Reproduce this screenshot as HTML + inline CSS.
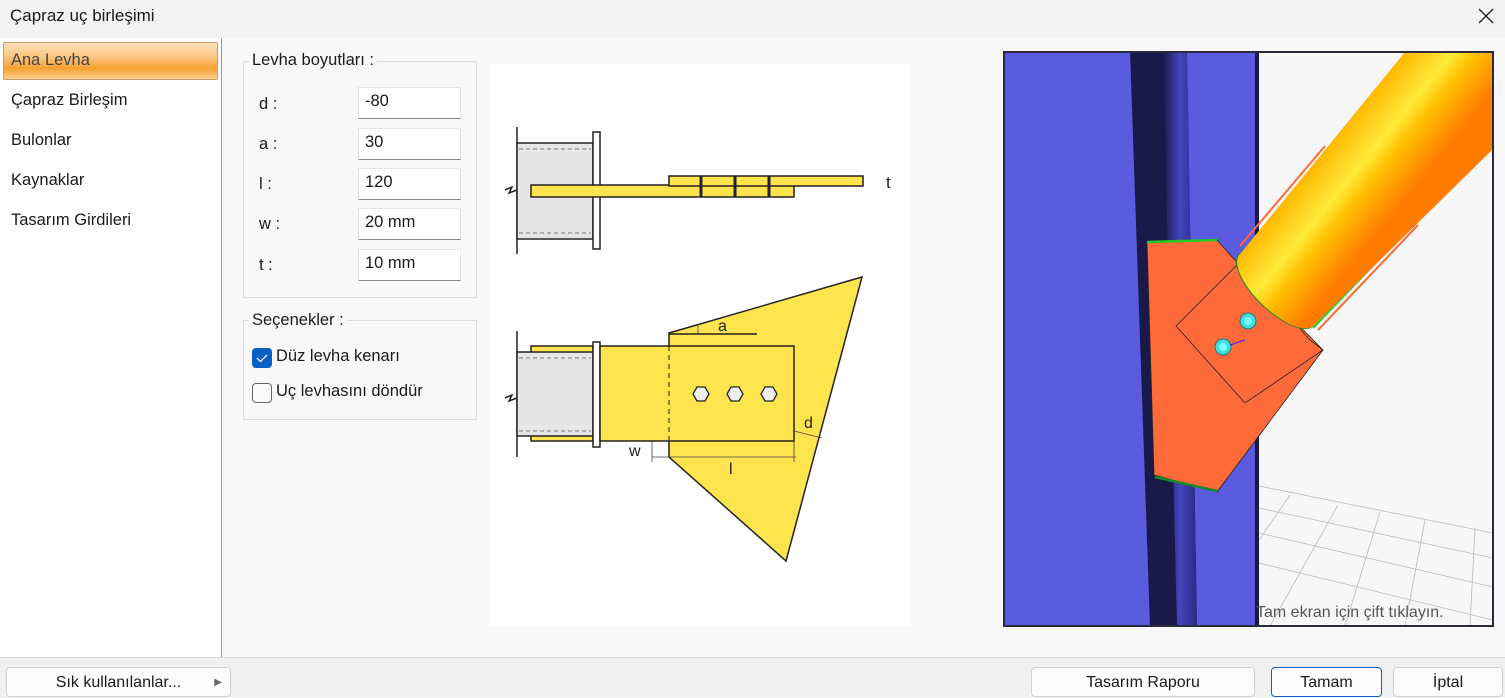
<!DOCTYPE html>
<html><head><meta charset="utf-8"><style>
*{box-sizing:border-box;margin:0;padding:0}
body{width:1505px;height:697px;background:#f8f8f8;font-family:"Segoe UI","Liberation Sans",sans-serif;color:#1a1a1a;position:relative;overflow:hidden;font-size:16px}
.abs{position:absolute}
.title{left:0;top:0;width:1505px;height:38px;background:#f3f3f3}
.title span{position:absolute;left:10px;top:6px;font-size:17px}
.left{left:0;top:38px;width:222px;height:620px;background:#fff;border-right:1px solid #999}
.item{position:absolute;left:11px;font-size:16.5px}
.sel{left:3px;top:42px;width:215px;height:38px;border:1px solid #c8a070;border-radius:2px;background:linear-gradient(#fde0b8 0%,#fbc580 40%,#f6a030 70%,#fbd08a 100%)}
.grp{border:1px solid #ddd;}
.lbl{position:absolute;font-size:16.5px}
.inp{position:absolute;left:358px;width:103px;height:32px;background:#fff;border:1px solid #e4e4e4;border-bottom:1px solid #888;padding:4px 0 0 6px;font-size:16.5px}
.btn{position:absolute;top:667px;height:30px;background:#fcfcfc;border:1px solid #d0d0d0;border-radius:4px;text-align:center;line-height:30px;font-size:16px}
</style></head><body>
<div class="abs title"><span>Çapraz uç birleşimi</span>
<svg class="abs" style="left:1477px;top:7px" width="18" height="18"><path d="M2 2L16 16M16 2L2 16" stroke="#222" stroke-width="1.4"/></svg></div>
<div class="abs left"></div>
<div class="abs sel"></div>
<div class="item" style="top:51px;color:#444">Ana Levha</div>
<div class="item" style="top:91px">Çapraz Birleşim</div>
<div class="item" style="top:131px">Bulonlar</div>
<div class="item" style="top:171px">Kaynaklar</div>
<div class="item" style="top:211px">Tasarım Girdileri</div>

<div class="abs grp" style="left:243px;top:61px;width:234px;height:237px"></div>
<div class="lbl" style="left:249px;top:51px;background:#f8f8f8;padding:0 3px">Levha boyutları :</div>
<div class="lbl" style="left:259px;top:95px">d :</div>
<div class="lbl" style="left:259px;top:135px">a :</div>
<div class="lbl" style="left:259px;top:175px">l :</div>
<div class="lbl" style="left:259px;top:215px">w :</div>
<div class="lbl" style="left:259px;top:256px">t :</div>
<div class="inp" style="top:87px">-80</div>
<div class="inp" style="top:128px">30</div>
<div class="inp" style="top:168px">120</div>
<div class="inp" style="top:208px">20 mm</div>
<div class="inp" style="top:249px">10 mm</div>

<div class="abs grp" style="left:243px;top:320px;width:234px;height:100px"></div>
<div class="lbl" style="left:249px;top:311px;background:#f8f8f8;padding:0 3px">Seçenekler :</div>
<div class="abs" style="left:252px;top:348px;width:20px;height:20px;background:#0a5fc4;border-radius:4px"><svg width="20" height="20"><path d="M5 10l3.5 3.5L15 7" stroke="#fff" fill="none" stroke-width="1.3"/></svg></div>
<div class="lbl" style="left:276px;top:347px">Düz levha kenarı</div>
<div class="abs" style="left:252px;top:383px;width:20px;height:20px;border:1px solid #666;border-radius:4px;background:#fafafa"></div>
<div class="lbl" style="left:276px;top:382px">Uç levhasını döndür</div>

<svg class="abs" style="left:490px;top:64px" width="420" height="562" viewBox="490 64 420 562">
<rect x="490" y="64" width="420" height="562" fill="#fff"/>
<g stroke="#222" stroke-width="1.5">
<line x1="517" y1="127" x2="517" y2="254"/>
<rect x="517" y="143" width="76" height="96" fill="#e6e6e6"/>
<line x1="519" y1="149" x2="591" y2="149" stroke-dasharray="4 3" stroke-width="1" stroke="#777"/>
<line x1="519" y1="233" x2="591" y2="233" stroke-dasharray="4 3" stroke-width="1" stroke="#777"/>
<rect x="593" y="132" width="7" height="117" fill="#fff"/>
<rect x="531" y="185" width="263" height="12" fill="#ffe44d"/>
<rect x="669" y="176" width="194" height="10" fill="#ffe44d"/>
<path d="M505 190l7-3-3 6 8-3" fill="none"/>
</g>
<g stroke="#222" stroke-width="3"><line x1="701" y1="176" x2="701" y2="197"/><line x1="735" y1="176" x2="735" y2="197"/><line x1="769" y1="176" x2="769" y2="197"/></g>
<text x="886" y="188" font-size="17" font-family="Liberation Sans" fill="#222">t</text>
<g stroke="#222" stroke-width="1.5">
<polygon points="669,333 862,277 786,561 669,457" fill="#ffe44d"/>
<line x1="517" y1="331" x2="517" y2="457"/>
<rect x="531" y="346" width="62" height="95" fill="#ffe44d"/>
<rect x="517" y="352" width="76" height="84" fill="#e6e6e6"/>
<line x1="519" y1="358" x2="591" y2="358" stroke-dasharray="4 3" stroke-width="1" stroke="#777"/>
<line x1="519" y1="431" x2="591" y2="431" stroke-dasharray="4 3" stroke-width="1" stroke="#777"/>
<rect x="593" y="342" width="7" height="105" fill="#fff"/>
<rect x="600" y="346" width="194" height="95" fill="#ffe44d"/>
<line x1="669" y1="346" x2="669" y2="441" stroke-dasharray="5 4" stroke-width="1"/>
<line x1="669" y1="334" x2="757" y2="334"/>
<path d="M505 398l7-3-3 6 8-3" fill="none"/>
<g fill="#eee" stroke-width="1.3">
<polygon points="693,394 697,387 705,387 709,394 705,401 697,401"/>
<polygon points="727,394 731,387 739,387 743,394 739,401 731,401"/>
<polygon points="761,394 765,387 773,387 777,394 773,401 765,401"/>
</g>
</g>
<g stroke="#444" stroke-width="0.8"><line x1="669" y1="457" x2="796" y2="457"/><line x1="794" y1="441" x2="794" y2="462"/><line x1="652" y1="440" x2="652" y2="462"/><line x1="652" y1="457" x2="669" y2="457"/><line x1="794" y1="431" x2="822" y2="438"/><line x1="698" y1="325" x2="698" y2="334"/></g>
<g font-family="Liberation Sans" font-size="16" fill="#222"><text x="718" y="331">a</text><text x="804" y="428">d</text><text x="629" y="456">w</text><text x="729" y="474">l</text></g>
</svg>

<svg class="abs" style="left:1003px;top:51px" width="491" height="576" viewBox="1003 51 491 576">
<rect x="1003" y="51" width="491" height="576" fill="#f7f7f7"/>
<g stroke="#bbb" stroke-width="0.8" fill="none">
<path d="M1259 486L1493 533M1259 508L1493 558M1259 533L1493 587M1259 563L1493 620M1290 495L1259 540M1338 505L1270 626M1380 512L1345 626M1425 520L1405 626M1475 528L1470 626"/>
</g>
<rect x="1003" y="51" width="256" height="576" fill="#5b5be0"/>
<polygon points="1130,51 1187,51 1197,626 1150,626" fill="#1a1a4a"/>
<defs><linearGradient id="cg" x1="0" x2="1"><stop offset="0" stop-color="#1a1a4a"/><stop offset="0.5" stop-color="#4545c0"/><stop offset="1" stop-color="#2a2a80"/></linearGradient>
<linearGradient id="tg" gradientUnits="userSpaceOnUse" x1="1240" y1="254" x2="1312" y2="313"><stop offset="0" stop-color="#ffb800"/><stop offset="0.4" stop-color="#ffea3a"/><stop offset="0.6" stop-color="#ffc000"/><stop offset="1" stop-color="#ff7c00"/></linearGradient></defs>
<polygon points="1163,51 1187,51 1197,626 1177,626" fill="url(#cg)"/>
<rect x="1255" y="51" width="4" height="576" fill="#1a1a40"/>
<polygon points="1147,242 1217,240 1233,258 1323,350 1217,492 1154,475" fill="#ff6a3a" stroke="#222" stroke-width="0.8"/>
<line x1="1147" y1="242" x2="1217" y2="240" stroke="#2c2" stroke-width="2.5"/>
<line x1="1155" y1="477" x2="1217" y2="491" stroke="#1a8a2a" stroke-width="2.5"/>
<polygon points="1176,326 1245,403 1323,350 1310,340 1240,262" fill="#ff6a3a" stroke="#222" stroke-width="0.8"/>
<line x1="1240" y1="246" x2="1325" y2="146" stroke="#ff6a3a" stroke-width="2"/>
<line x1="1318" y1="330" x2="1418" y2="225" stroke="#ff6a3a" stroke-width="2"/>
<line x1="1313" y1="328" x2="1415" y2="222" stroke="#2c2" stroke-width="2"/>
<ellipse cx="1276" cy="290" rx="51" ry="20" transform="rotate(44 1276 290)" fill="#ff6a3a" stroke="#1a8a2a" stroke-width="1.5"/>
<path d="M1240,254 L1405,52 L1493,52 L1493,149 L1313,326 A51 20 44 0 1 1240,254 Z" fill="url(#tg)"/>
<circle cx="1248" cy="321" r="8" fill="#4dd" stroke="#277" stroke-width="1"/><circle cx="1248" cy="321" r="4" fill="#7ff"/>
<circle cx="1223" cy="347" r="8" fill="#4dd" stroke="#277" stroke-width="1"/><circle cx="1223" cy="347" r="4" fill="#7ff"/>
<line x1="1230" y1="345" x2="1245" y2="340" stroke="#22f"/>
<text x="1256" y="617" font-family="Liberation Sans" font-size="16" fill="#555">Tam ekran için çift tıklayın.</text>
<rect x="1004" y="52" width="489" height="574" fill="none" stroke="#2a2a3a" stroke-width="2"/>
</svg>

<div class="abs" style="left:0;top:657px;width:1505px;height:40px;background:#f0f0f0;border-top:1px solid #ddd"></div>
<div class="btn" style="left:6px;width:225px">Sık kullanılanlar...<span style="position:absolute;right:8px;top:0;font-size:10px;color:#666">▶</span></div>
<div class="btn" style="left:1031px;width:224px">Tasarım Raporu</div>
<div class="btn" style="left:1271px;width:111px;border-color:#0a5fc4">Tamam</div>
<div class="btn" style="left:1393px;width:110px">İptal</div>
</body></html>
